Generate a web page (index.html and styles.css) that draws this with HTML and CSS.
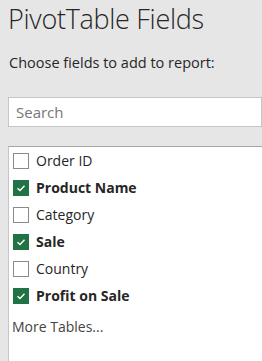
FILE: index.html
```html
<!DOCTYPE html>
<html lang="en">

<head>
    <meta charset="UTF-8">
    <meta name="viewport" content="width=device-width, initial-scale=1.0">
    <title>PivotTable Fields</title>
    <link rel="stylesheet" href="styles.css">
</head>

<body>
    <div class="pane">
        <h1 class="title">PivotTable Fields</h1>
        <p class="hint">Choose fields to add to report:</p>
        <input class="search" type="text" placeholder="Search">

        <div class="field-list">
            <ul class="fields" id="field-list">
                <!-- fields -->
            </ul>
            <div class="more">More Tables...</div>
        </div>
    </div>

    <script>
        var fields = [
            { name: "Order ID", checked: false },
            { name: "Product Name", checked: true },
            { name: "Category", checked: false },
            { name: "Sale", checked: true },
            { name: "Country", checked: false },
            { name: "Profit on Sale", checked: true }
        ];

        var tick = '<svg width="10" height="8" viewBox="0 0 10 8"><path d="M1.5 4.2 L4 6.5 L8.5 1.8" fill="none" stroke="#fff" stroke-width="1.4"/></svg>';

        function showFields() {
            var list = document.getElementById('field-list');
            list.innerHTML = '';
            fields.forEach(function (field) {
                var item = document.createElement('li');
                item.className = field.checked ? 'field checked' : 'field';
                item.innerHTML = '<span class="box">' + (field.checked ? tick : '') + '</span><span class="label">' + field.name + '</span>';
                list.appendChild(item);
            });
        }

        showFields();
    </script>
</body>

</html>
```

FILE: styles.css
```css
body {
    margin: 0;
    background-color: #e6e6e6;
    font-family: "Open Sans", Arial, sans-serif;
    color: #262626;
    overflow: hidden;
}

.pane {
    display: flex;
    flex-direction: column;
    padding-left: 8px;
    height: 361px;
}

.title {
    margin: 0;
    padding-top: 1px;
    font-size: 27px;
    font-weight: 300;
    line-height: 36px;
    color: #262626;
    letter-spacing: -0.3px;
}

.hint {
    margin: 16px 0 0 1px;
    font-size: 14.5px;
    line-height: 20px;
    color: #262626;
}

.search {
    margin-top: 24px;
    width: 100%;
    height: 30px;
    box-sizing: border-box;
    border: 1px solid #c6c6c6;
    background-color: #fff;
    padding: 0 7px;
    font-family: "Open Sans", Arial, sans-serif;
    font-size: 15px;
    color: #262626;
    outline: none;
}

.search::placeholder {
    color: #767676;
}

.field-list {
    margin-top: 19px;
    flex: 1;
    background-color: #fff;
    border-top: 1px solid #a6a6a6;
    border-left: 1px solid #c6c6c6;
}

.fields {
    list-style: none;
    margin: 0;
    padding: 0;
}

.field {
    display: flex;
    align-items: center;
    gap: 7px;
    height: 27px;
    padding-left: 4px;
    font-size: 14px;
}

.box {
    width: 16px;
    height: 16px;
    box-sizing: border-box;
    border: 1px solid #8a8a8a;
    background-color: #fff;
    display: flex;
    align-items: center;
    justify-content: center;
}

.checked .box {
    border-color: #217346;
    background-color: #217346;
}

.checked .label {
    font-weight: 700;
}

.more {
    margin-top: 8px;
    padding-left: 3px;
    font-size: 14px;
    line-height: 20px;
    color: #444;
}
```
